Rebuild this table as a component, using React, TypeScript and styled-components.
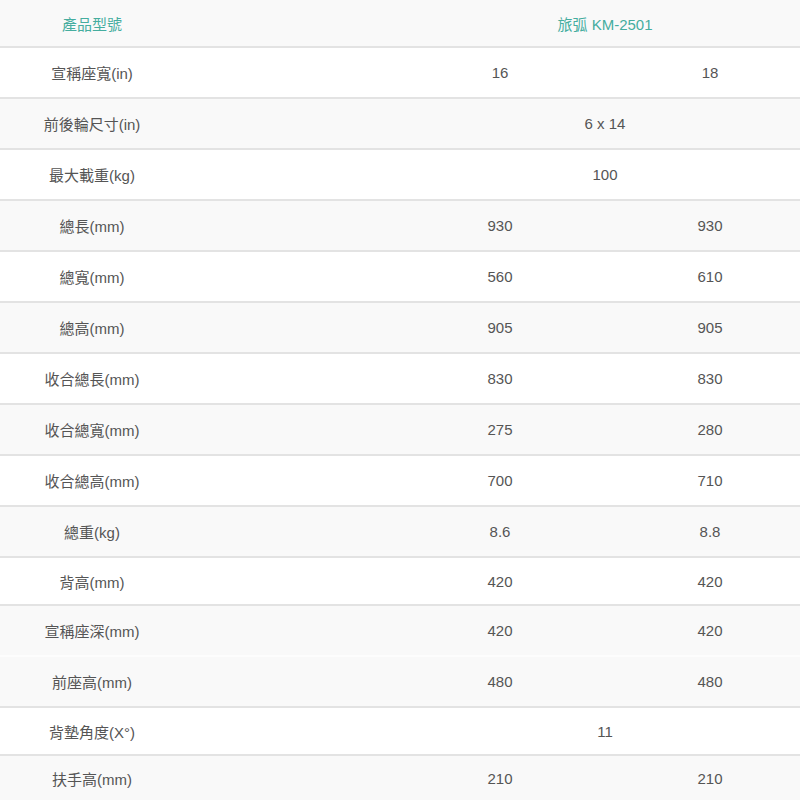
import React from "react";
import styled, { createGlobalStyle } from "styled-components";

const Global = createGlobalStyle`
  html, body { margin: 0; padding: 0; background: #fff; }
  body { font-family: "Liberation Sans", Arial, "Noto Sans CJK TC", sans-serif; }
`;

const Wrap = styled.div`
  width: 800px;
  overflow: hidden;
`;

const Table = styled.div`
  width: 815px;
  display: flex;
  flex-direction: column;
`;

const Row = styled.div<{ $grey?: boolean; $h: number; $soft?: boolean }>`
  display: grid;
  grid-template-columns: 184px 211px 210px 210px;
  height: ${(p) => p.$h}px;
  box-sizing: border-box;
  background: ${(p) => (p.$grey ? "#f9f9f9" : "#ffffff")};
  border-bottom: 2px solid ${(p) => (p.$soft ? "#fdfdfd" : "#e3e3e3")};
`;

const Cell = styled.div<{ $span?: boolean; $col: number; $head?: boolean }>`
  grid-column: ${(p) => (p.$span ? "3 / 5" : `${p.$col} / ${p.$col + 1}`)};
  display: flex;
  align-items: center;
  justify-content: center;
  font-size: 15px;
  color: ${(p) => (p.$head ? "#45ad9f" : "#555555")};
  white-space: nowrap;
`;

type R = { label: string; a: string; b?: string; grey?: boolean; h?: number; soft?: boolean };

const rows: R[] = [
  { label: "宣稱座寬(in)", a: "16", b: "18" },
  { label: "前後輪尺寸(in)", a: "6 x 14", grey: true },
  { label: "最大載重(kg)", a: "100" },
  { label: "總長(mm)", a: "930", b: "930", grey: true },
  { label: "總寬(mm)", a: "560", b: "610" },
  { label: "總高(mm)", a: "905", b: "905", grey: true },
  { label: "收合總長(mm)", a: "830", b: "830" },
  { label: "收合總寬(mm)", a: "275", b: "280", grey: true },
  { label: "收合總高(mm)", a: "700", b: "710" },
  { label: "總重(kg)", a: "8.6", b: "8.8", grey: true },
  { label: "背高(mm)", a: "420", b: "420", h: 48 },
  { label: "宣稱座深(mm)", a: "420", b: "420", grey: true, soft: true },
  { label: "前座高(mm)", a: "480", b: "480", grey: true },
  { label: "背墊角度(X°)", a: "11", h: 48 },
  { label: "扶手高(mm)", a: "210", b: "210", grey: true, h: 46 },
];

export default function App() {
  return (
    <Wrap>
      <Global />
      <Table>
        <Row $grey $h={48}>
          <Cell $col={1} $head>產品型號</Cell>
          <Cell $col={3} $span $head>旅弧 KM-2501</Cell>
        </Row>
        {rows.map((r) => (
          <Row key={r.label} $grey={r.grey} $h={r.h ?? 51} $soft={r.soft}>
            <Cell $col={1}>{r.label}</Cell>
            {r.b === undefined ? (
              <Cell $col={3} $span>{r.a}</Cell>
            ) : (
              <>
                <Cell $col={3}>{r.a}</Cell>
                <Cell $col={4}>{r.b}</Cell>
              </>
            )}
          </Row>
        ))}
      </Table>
    </Wrap>
  );
}
